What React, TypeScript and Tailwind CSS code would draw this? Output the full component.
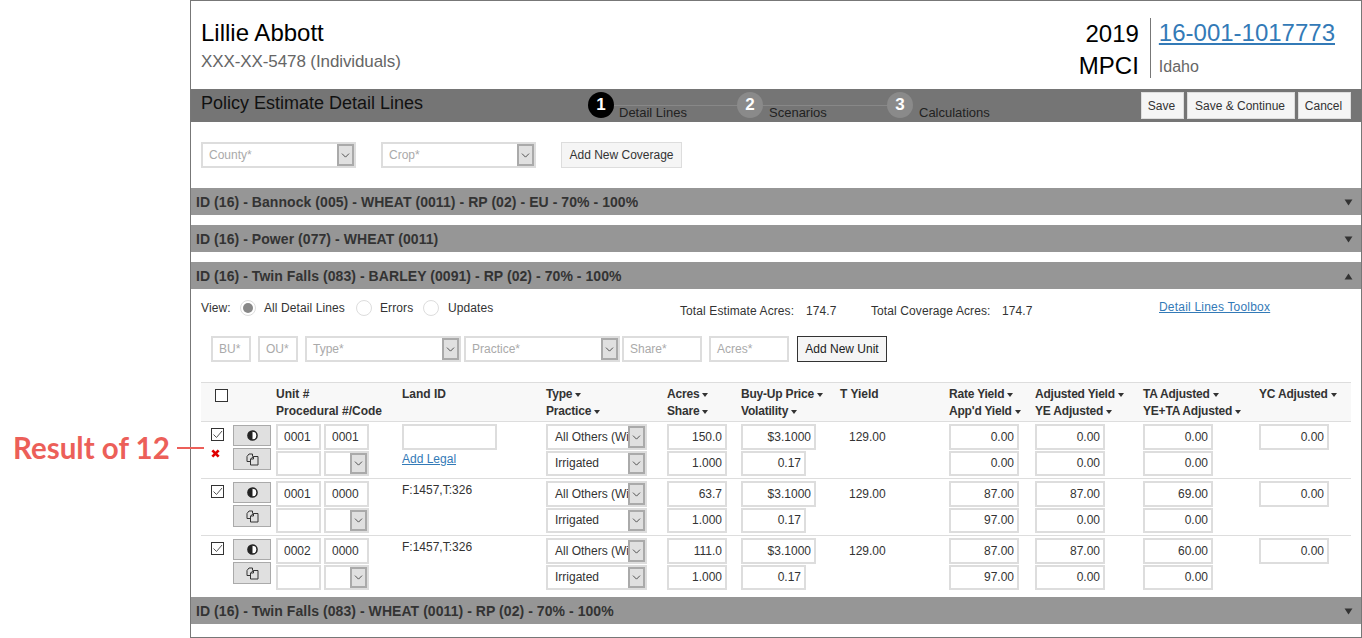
import { ChevronDown } from "lucide-react";

// column widths shared by the table header and the rows
const COL = {
  check: "w-[32px]",
  actions: "w-[43px]",
  unit: "w-[126px]",
  land: "w-[144px]",
  type: "w-[121px]",
  acres: "w-[74px]",
  price: "w-[99px]",
  tYield: "w-[109px]",
  rate: "w-[86px]",
  adjusted: "w-[108px]",
  ta: "w-[116px]",
  yc: "w-[92px]",
};

// the upper and lower input of a stacked cell differ by a pixel
const UPPER = "h-[26px]";
const LOWER = "h-[25px] pb-[1px]";

const ROWS = [
  { unit: "0001", proc: "0001", land: "", acres: "150.0", rate: "0.00", app: "0.00", adj: "0.00", ye: "0.00", ta: "0.00", yeta: "0.00", bad: true },
  { unit: "0001", proc: "0000", land: "F:1457,T:326", acres: "63.7", rate: "87.00", app: "97.00", adj: "87.00", ye: "0.00", ta: "69.00", yeta: "0.00", bad: false },
  { unit: "0002", proc: "0000", land: "F:1457,T:326", acres: "111.0", rate: "87.00", app: "97.00", adj: "87.00", ye: "0.00", ta: "60.00", yeta: "0.00", bad: false },
];

function Caret({ up = false }: { up?: boolean }) {
  return (
    <svg viewBox="0 0 10 8" className="h-[7px] w-[9px] fill-[#333]">
      <path d={up ? "M5 0.5 L9.5 7.5 L0.5 7.5 Z" : "M0.5 0.5 L9.5 0.5 L5 7.5 Z"} />
    </svg>
  );
}

function Sort({ label }: { label: string }) {
  return (
    <div className="flex h-[17px] items-center gap-[3px] whitespace-nowrap tracking-[-0.2px]">
      {label}
      <span className="h-0 w-0 border-x-[3px] border-t-[4px] border-x-transparent border-t-[#333]" />
    </div>
  );
}

function Box({ children, className = "" }: { children?: React.ReactNode; className?: string }) {
  return (
    <div className={`flex items-center overflow-hidden whitespace-nowrap border-2 border-[#ddd] bg-white px-[6px] text-[12px] text-[#333] ${className}`}>
      {children}
    </div>
  );
}

function Num({ value, className = "" }: { value: string; className?: string }) {
  return <Box className={`justify-end !pr-[3px] ${className}`}>{value}</Box>;
}

function Select({ label, className = "", placeholder = false }: { label: string; className?: string; placeholder?: boolean }) {
  return (
    <div className={`relative flex items-center overflow-hidden whitespace-nowrap border-2 border-[#ddd] bg-white text-[12px] ${placeholder ? "pl-[6px] text-[#aaa]" : "pl-[7px] text-[#333]"} ${className}`}>
      {label}
      <span className="absolute inset-y-0 right-0 flex w-[17px] items-center justify-center border-2 border-[#aaa] bg-[#e0e0e0]">
        <ChevronDown className="h-[13px] w-[13px] text-[#333]" strokeWidth={1.5} />
      </span>
    </div>
  );
}

function SectionBar({ title, open = false, className = "" }: { title: string; open?: boolean; className?: string }) {
  return (
    <div className={`flex h-[27px] shrink-0 items-center justify-between bg-[#969696] pl-[5px] pr-[8px] pt-[1px] text-[14px] font-bold tracking-[0.06px] text-[#333] ${className}`}>
      <span>{title}</span>
      <Caret up={open} />
    </div>
  );
}

function Step({ n, label, active = false, className = "" }: { n: number; label: string; active?: boolean; className?: string }) {
  return (
    <div className={`flex items-end ${className}`}>
      <span className={`flex h-[26px] w-[26px] shrink-0 items-center justify-center rounded-full text-[17px] font-bold text-white ${active ? "bg-black" : "bg-[#8a8a8a]"}`}>
        {n}
      </span>
      <span className={`-mb-[2px] text-[13px] leading-[14px] text-[#222] ${active ? "ml-[5px]" : "ml-[6px]"}`}>{label}</span>
    </div>
  );
}

function BarButton({ label, className = "" }: { label: string; className?: string }) {
  return (
    <button type="button" className={`h-[27px] border border-[#ddd] bg-[#f5f5f5] pr-[2px] text-[12px] text-[#333] ${className}`}>
      {label}
    </button>
  );
}

function Radio({ checked = false }: { checked?: boolean }) {
  return (
    <span className="flex h-[16px] w-[16px] items-center justify-center rounded-full border border-[#ddd] bg-white">
      {checked && <span className="h-[10px] w-[10px] rounded-full bg-[#888]" />}
    </span>
  );
}

function Check({ checked = false }: { checked?: boolean }) {
  return (
    <span className="flex h-[13px] w-[13px] items-center justify-center border border-[#333] bg-white">
      {checked && (
        <svg viewBox="0 0 11 11" className="h-[11px] w-[11px] fill-none stroke-[#555]">
          <path d="M1.5 5.5 L4.5 8.5 L10 2" strokeWidth="1" />
        </svg>
      )}
    </span>
  );
}

function AdjustIcon() {
  return (
    <svg viewBox="0 0 12 12" className="h-[11px] w-[11px]">
      <circle cx="6" cy="6" r="5" fill="#fff" stroke="#222" strokeWidth="1.6" />
      <path d="M6 1 A5 5 0 0 0 6 11 Z" fill="#222" />
    </svg>
  );
}

function DuplicateIcon() {
  return (
    <svg viewBox="0 0 13 13" className="h-[13px] w-[13px] fill-none stroke-[#333]" strokeWidth="1">
      <path d="M6.5 3.5 L6.5 1 L3 1 L1 3.5 L1 8.5 L4.5 8.5" />
      <path d="M7.5 3.5 L12 3.5 L12 12 L4.5 12 L4.5 6 L7.5 3.5 Z" />
      <path d="M7.5 3.5 L7.5 6 L4.5 6" />
    </svg>
  );
}

function ActionButton({ children, className = "" }: { children: React.ReactNode; className?: string }) {
  return (
    <button type="button" className={`flex w-[38px] items-center justify-center border border-[#aaa] bg-[#e0e0e0] ${className}`}>
      {children}
    </button>
  );
}

function Row({ row }: { row: (typeof ROWS)[number] }) {
  return (
    <div className="flex h-[57px] border-b border-[#ddd] pt-[2px] last:border-b-0">
      <div className={`${COL.check} flex flex-col pl-[10px] pt-[4px]`}>
        <Check checked />
        {row.bad && (
          <svg viewBox="0 0 10 10" className="mt-[8px] h-[9px] w-[9px] stroke-[#e00000]" strokeWidth="3">
            <path d="M1.5 1.5 L8.5 8.5 M8.5 1.5 L1.5 8.5" />
          </svg>
        )}
      </div>
      <div className={`${COL.actions} flex flex-col gap-[2px] pt-[1px]`}>
        <ActionButton className="h-[21px]"><AdjustIcon /></ActionButton>
        <ActionButton className="h-[22px]"><DuplicateIcon /></ActionButton>
      </div>
      <div className={`${COL.unit} flex flex-col gap-[1px]`}>
        <div className="flex gap-[3px]">
          <Box className={`${UPPER} w-[45px]`}>{row.unit}</Box>
          <Box className={`${UPPER} w-[45px]`}>{row.proc}</Box>
        </div>
        <div className="flex gap-[3px]">
          <Box className={`${LOWER} w-[45px]`} />
          <Select label="" className={`${LOWER} w-[45px]`} />
        </div>
      </div>
      <div className={`${COL.land} text-[12px] text-[#333]`}>
        {row.bad ? (
          <>
            <Box className={`${UPPER} w-[95px]`} />
            <a href="#" className="mt-[1px] block leading-[16px] text-[#337ab7] underline">Add Legal</a>
          </>
        ) : (
          <div className="pt-[1px] leading-[16px]">{row.land}</div>
        )}
      </div>
      <div className={`${COL.type} flex flex-col gap-[1px]`}>
        <Select label="All Others (Wi" className={`${UPPER} w-[101px]`} />
        <Select label="Irrigated" className={`${LOWER} w-[101px]`} />
      </div>
      <div className={`${COL.acres} flex flex-col gap-[1px]`}>
        <Num value={row.acres} className={`${UPPER} w-[60px]`} />
        <Num value="1.000" className={`${LOWER} w-[60px]`} />
      </div>
      <div className={`${COL.price} flex flex-col gap-[1px]`}>
        <Num value="$3.1000" className={`${UPPER} w-[75px]`} />
        <Num value="0.17" className={`${LOWER} w-[65px]`} />
      </div>
      <div className={`${COL.tYield} pl-[9px] pt-[5px] text-[12px] leading-[16px] text-[#333]`}>129.00</div>
      <div className={`${COL.rate} flex flex-col gap-[1px]`}>
        <Num value={row.rate} className={`${UPPER} w-[70px]`} />
        <Num value={row.app} className={`${LOWER} w-[70px]`} />
      </div>
      <div className={`${COL.adjusted} flex flex-col gap-[1px]`}>
        <Num value={row.adj} className={`${UPPER} w-[70px]`} />
        <Num value={row.ye} className={`${LOWER} w-[70px]`} />
      </div>
      <div className={`${COL.ta} flex flex-col gap-[1px]`}>
        <Num value={row.ta} className={`${UPPER} w-[70px]`} />
        <Num value={row.yeta} className={`${LOWER} w-[70px]`} />
      </div>
      <div className={COL.yc}>
        <Num value="0.00" className={`${UPPER} w-[70px]`} />
      </div>
    </div>
  );
}

export default function App() {
  return (
    <div className="relative flex h-[638px] w-[1362px] overflow-hidden bg-white font-['Liberation_Sans',Arial,sans-serif]">
      {/* callout beside the panel */}
      <div className="w-[190px] shrink-0 whitespace-nowrap pl-[13px] pt-[428px] font-['Lato',sans-serif] text-[29.5px] font-bold leading-[40px] text-[#ec5f59]">
        Result of 12
      </div>
      <div className="absolute left-[177px] top-[447px] z-10 h-[2px] w-[27px] bg-[#ec5f59]" />

      <div className="flex h-[638px] w-[1172px] flex-col border border-[#777]">
        {/* policy header */}
        <div className="flex h-[88px] shrink-0 justify-between pl-[10px] pr-[26px]">
          <div className="pt-[17px]">
            <div className="text-[24px] leading-[30px] text-black">Lillie Abbott</div>
            <div className="mt-[3px] text-[17px] leading-[22px] tracking-[-0.1px] text-[#666]">XXX-XX-5478 (Individuals)</div>
          </div>
          <div className="flex pt-[17px]">
            <div className="flex flex-col items-end pr-[11px] pt-[1px] text-[24px] leading-[30px] text-black">
              <span>2019</span>
              <span className="mt-[2px]">MPCI</span>
            </div>
            <div className="h-[60px] border-l border-[#777] pl-[8px]">
              <a href="#" className="block text-[24px] leading-[30px] text-[#337ab7] underline">16-001-1017773</a>
              <div className="mt-[6px] text-[16px] leading-[26px] text-[#666]">Idaho</div>
            </div>
          </div>
        </div>

        {/* page bar with steps */}
        <div className="flex h-[33px] shrink-0 bg-[#757575] px-[10px]">
          <div className="w-[387px] pt-[2px] text-[18px] leading-[24px] text-[#111]">Policy Estimate Detail Lines</div>
          <div className="relative flex w-[553px] items-start pt-[3px]">
            <div className="absolute left-[20px] top-[16px] h-[1px] w-[280px] bg-[#888]" />
            <div className="relative flex">
              <Step n={1} label="Detail Lines" active className="w-[149px]" />
              <Step n={2} label="Scenarios" className="w-[150px]" />
              <Step n={3} label="Calculations" className="w-[150px]" />
            </div>
          </div>
          <div className="flex items-start gap-[3px] pt-[3px]">
            <BarButton label="Save" className="w-[43px]" />
            <BarButton label="Save & Continue" className="w-[108px]" />
            <BarButton label="Cancel" className="w-[53px]" />
          </div>
        </div>

        {/* add coverage */}
        <div className="mt-[20px] flex pl-[10px]">
          <Select label="County*" placeholder className="h-[26px] w-[155px]" />
          <Select label="Crop*" placeholder className="ml-[25px] h-[26px] w-[155px]" />
          <button type="button" className="ml-[25px] h-[26px] w-[121px] border border-[#ddd] bg-[#f5f5f5] text-[12px] text-[#333]">
            Add New Coverage
          </button>
        </div>

        <SectionBar title="ID (16) - Bannock (005) - WHEAT (0011) - RP (02) - EU - 70% - 100%" className="mt-[20px]" />
        <SectionBar title="ID (16) - Power (077) - WHEAT (0011)" className="mt-[10px]" />
        <SectionBar title="ID (16) - Twin Falls (083) - BARLEY (0091) - RP (02) - 70% - 100%" open className="mt-[10px]" />

        {/* view switch and totals */}
        <div className="flex h-[47px] shrink-0 pl-[10px] text-[12px] tracking-[0.1px] text-[#333]">
          <div className="flex h-[37px] w-[479px] items-center">
            <span className="w-[39px]">View:</span>
            <Radio checked />
            <span className="ml-[8px] w-[92px]">All Detail Lines</span>
            <Radio />
            <span className="ml-[8px] w-[43px]">Errors</span>
            <Radio />
            <span className="ml-[9px]">Updates</span>
          </div>
          <div className="flex h-[44px] w-[479px] items-center">
            <span className="w-[126px]">Total Estimate Acres:</span>
            <span className="w-[65px]">174.7</span>
            <span className="w-[131px]">Total Coverage Acres:</span>
            <span>174.7</span>
          </div>
          <a href="#" className="pt-[10px] leading-[16px] tracking-[0.2px] text-[#337ab7] underline">Detail Lines Toolbox</a>
        </div>

        {/* add unit */}
        <div className="flex pl-[20px]">
          <Box className="h-[26px] w-[40px] !text-[#aaa]">BU*</Box>
          <Box className="ml-[7px] h-[26px] w-[40px] !text-[#aaa]">OU*</Box>
          <Select label="Type*" placeholder className="ml-[7px] h-[26px] w-[156px]" />
          <Select label="Practice*" placeholder className="ml-[3px] h-[26px] w-[156px]" />
          <Box className="ml-[2px] h-[26px] w-[80px] !text-[#aaa]">Share*</Box>
          <Box className="ml-[7px] h-[26px] w-[80px] !text-[#aaa]">Acres*</Box>
          <button type="button" className="ml-[8px] h-[26px] w-[90px] border border-[#333] bg-[#f5f5f5] text-[12px] text-[#222]">
            Add New Unit
          </button>
        </div>

        {/* detail lines table */}
        <div className="ml-[10px] mt-[20px] w-[1150px]">
          <div className="flex h-[40px] border-y border-[#ddd] bg-[#f8f8f8] pt-[3px] text-[12px] font-bold leading-[17px] text-[#333]">
            <div className={`${COL.check} pl-[14px] pt-[3px]`}>
              <Check />
            </div>
            <div className={COL.actions} />
            <div className={COL.unit}>
              <div>Unit #</div>
              <div className="whitespace-nowrap">Procedural #/Code</div>
            </div>
            <div className={COL.land}>Land ID</div>
            <div className={COL.type}><Sort label="Type" /><Sort label="Practice" /></div>
            <div className={COL.acres}><Sort label="Acres" /><Sort label="Share" /></div>
            <div className={COL.price}><Sort label="Buy-Up Price" /><Sort label="Volatility" /></div>
            <div className={COL.tYield}>T Yield</div>
            <div className={COL.rate}><Sort label="Rate Yield" /><Sort label="App'd Yield" /></div>
            <div className={COL.adjusted}><Sort label="Adjusted Yield" /><Sort label="YE Adjusted" /></div>
            <div className={COL.ta}><Sort label="TA Adjusted" /><Sort label="YE+TA Adjusted" /></div>
            <div className={COL.yc}><Sort label="YC Adjusted" /></div>
          </div>
          {ROWS.map((row, i) => (
            <Row key={i} row={row} />
          ))}
        </div>

        <SectionBar title="ID (16) - Twin Falls (083) - WHEAT (0011) - RP (02) - 70% - 100%" className="mt-[4px]" />
      </div>
    </div>
  );
}
